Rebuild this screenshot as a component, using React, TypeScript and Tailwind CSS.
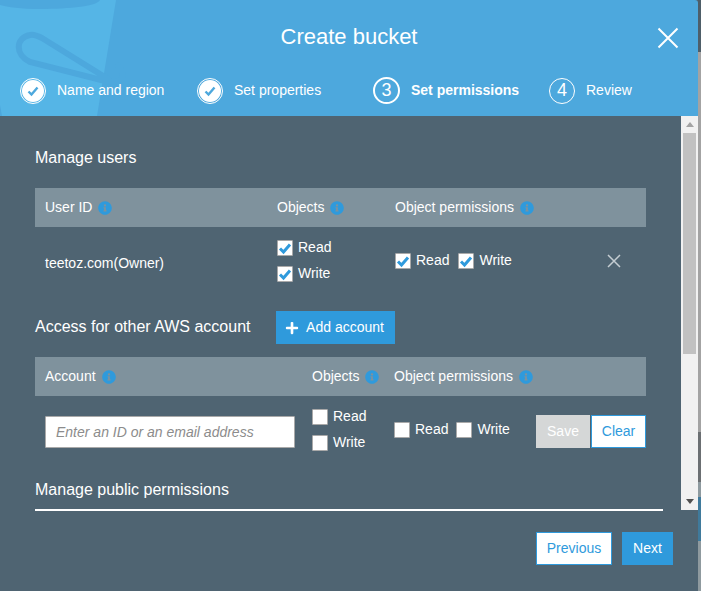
import React from "react";
import { FaInfoCircle, FaPlus } from "react-icons/fa";

function Info() {
  return <FaInfoCircle className="text-[#2f9adc] ml-[6px] w-[14px] h-[14px] shrink-0" />;
}

function Check({ checked, className = "" }: { checked?: boolean; className?: string }) {
  return (
    <span className={"flex items-center justify-center w-[16px] h-[16px] bg-white border border-[#a9a9a9] rounded-[1px] shrink-0 " + className}>
      {checked && (
        <svg viewBox="0 0 14 14" className="w-[14px] h-[14px]">
          <path d="M2 7.5 L5.5 11 L12 3.5" fill="none" stroke="#2f9adc" strokeWidth="3" />
        </svg>
      )}
    </span>
  );
}

function Opt({ label, checked, gap = "ml-[5px]" }: { label: string; checked?: boolean; gap?: string }) {
  return (
    <div className="flex items-center h-[16px]">
      <Check checked={checked} />
      <span className={gap + " text-[14px] text-white"}>{label}</span>
    </div>
  );
}

function Step({ label, state, n, wide }: { label: string; state: "done" | "active" | "todo"; n?: number; wide: string }) {
  return (
    <div className={"flex items-center " + wide}>
      {state === "done" && (
        <span className="flex items-center justify-center w-[26px] h-[26px] rounded-full border border-white shrink-0">
          <span className="flex items-center justify-center w-[22px] h-[22px] rounded-full bg-white">
            <svg viewBox="0 0 14 14" className="w-[14px] h-[14px]">
              <path d="M2.5 7.5 L5.5 10.5 L11.5 3.5" fill="none" stroke="#4da8dd" strokeWidth="2.4" />
            </svg>
          </span>
        </span>
      )}
      {state === "active" && (
        <span className="flex items-center justify-center w-[27px] h-[27px] rounded-full border-2 border-white text-white text-[18px] shrink-0">{n}</span>
      )}
      {state === "todo" && (
        <span className="flex items-center justify-center w-[26px] h-[26px] rounded-full border border-white text-white text-[18px] font-light shrink-0">{n}</span>
      )}
      <span className={(state === "active" ? "ml-[11px] font-bold" : "ml-[11px]") + " text-[14px] text-white whitespace-nowrap"}>{label}</span>
    </div>
  );
}

export default function App() {
  return (
    <div className="flex w-[701px] h-[591px] overflow-hidden bg-[#4f6472] [font-family:'Liberation_Sans',Arial,sans-serif]">
      <div className="flex flex-col w-[698px] h-full">
        <header className="relative h-[116px] bg-[#4da8dd] rounded-tr-[3px] overflow-hidden shrink-0">
          <svg className="absolute left-0 top-0" width="130" height="116" viewBox="0 0 130 116">
            <path d="M0 0 H116 L97 116 H2 L0 105 Z" fill="#55b5e6" />
            <path d="M0 0 H100 C98 6 70 9 40 9 C20 9 8 7 0 5 Z" fill="#4da8dd" />
            <path
              d="M118 66 C124 72 127 82 112 82 L105 81 L30 62 C15 55 15 38 30 35 C34 34 38 36 42 38 L108 79"
              fill="none"
              stroke="#4da8dd"
              strokeWidth="6"
              strokeLinecap="round"
            />
          </svg>
          <div className="relative flex justify-center pt-[24px]">
            <h1 className="text-[22px] leading-[26px] text-white">Create bucket</h1>
          </div>
          <svg className="absolute left-[657px] top-[27px]" width="22" height="22" viewBox="0 0 22 22">
            <path d="M1.5 1.5 L20.5 20.5 M20.5 1.5 L1.5 20.5" stroke="#fff" strokeWidth="2" fill="none" />
          </svg>
          <nav className="relative flex pl-[20px] pt-[27px]">
            <Step label="Name and region" state="done" wide="w-[177px]" />
            <Step label="Set properties" state="done" wide="w-[176px]" />
            <Step label="Set permissions" state="active" n={3} wide="w-[176px]" />
            <Step label="Review" state="todo" n={4} wide="w-[120px]" />
          </nav>
        </header>

        <div className="flex h-[394px] shrink-0">
          <main className="w-[681px] overflow-hidden pl-[35px] pt-[33px]">
            <h2 className="text-[16px] leading-[18px] text-white">Manage users</h2>
            <div className="mt-[21px] w-[611px] h-[39px] bg-[#7f929d] grid grid-cols-[232px_118px_1fr] pl-[10px] items-center text-[14px] text-white">
              <div className="flex items-center">User ID<Info /></div>
              <div className="flex items-center">Objects<Info /></div>
              <div className="flex items-center">Object permissions<Info /></div>
            </div>
            <div className="w-[611px] h-[67px] grid grid-cols-[232px_118px_1fr] pl-[10px] items-center text-[14px] text-white">
              <div className="mt-[6px]">teetoz.com(Owner)</div>
              <div className="flex flex-col gap-[10px]">
                <Opt label="Read" checked />
                <Opt label="Write" checked />
              </div>
              <div className="flex items-center">
                <Opt label="Read" checked />
                <div className="ml-[9px]"><Opt label="Write" checked /></div>
                <svg className="ml-[95px]" width="14" height="14" viewBox="0 0 14 14">
                  <path d="M1 1 L13 13 M13 1 L1 13" stroke="#c5cdd2" strokeWidth="1.5" fill="none" />
                </svg>
              </div>
            </div>

            <div className="flex items-center h-[33px] mt-[17px]">
              <h2 className="w-[241px] text-[16px] text-white -mt-[2px]">Access for other AWS account</h2>
              <button className="flex items-center justify-center w-[119px] h-[33px] pr-[2px] bg-[#2f9adc] text-[14px] text-white">
                <FaPlus className="w-[14px] h-[14px] mr-[7px]" />
                Add account
              </button>
            </div>

            <div className="mt-[13px] w-[611px] h-[39px] bg-[#7f929d] grid grid-cols-[267px_82px_1fr] pl-[10px] items-center text-[14px] text-white">
              <div className="flex items-center">Account<Info /></div>
              <div className="flex items-center">Objects<Info /></div>
              <div className="flex items-center">Object permissions<Info /></div>
            </div>
            <div className="w-[611px] h-[67px] grid grid-cols-[267px_82px_142px_1fr] pl-[10px] items-center text-[14px] text-white">
              <div className="w-[250px] h-[32px] mt-[5px] flex items-center bg-white border border-[#a9a9a9] rounded-[1px] pl-[10px] text-[14px] italic text-[#8c8c8c] whitespace-nowrap">
                Enter an ID or an email address
              </div>
              <div className="flex flex-col gap-[10px]">
                <Opt label="Read" />
                <Opt label="Write" />
              </div>
              <div className="flex items-center">
                <Opt label="Read" />
                <div className="ml-[8px]"><Opt label="Write" /></div>
              </div>
              <div className="flex items-center gap-[1px] mt-[4px]">
                <button className="w-[54px] h-[33px] bg-[#d5d7d7] text-[14px] text-white">Save</button>
                <button className="w-[55px] h-[33px] bg-white border border-[#2f9adc] text-[14px] text-[#2f9adc]">Clear</button>
              </div>
            </div>

            <h2 className="mt-[18px] text-[16px] leading-[18px] text-white">Manage public permissions</h2>
          </main>

          <div className="w-[17px] h-full bg-[#f1f1f1] flex flex-col items-center">
            <svg className="mt-[6px]" width="8" height="5" viewBox="0 0 8 5"><path d="M4 0 L8 5 H0 Z" fill="#a3a3a3" /></svg>
            <div className="mt-[6px] w-[13px] h-[221px] bg-[#c1c1c1]" />
            <svg className="mt-auto mb-[6px]" width="8" height="5" viewBox="0 0 8 5"><path d="M0 0 H8 L4 5 Z" fill="#505050" /></svg>
          </div>
        </div>

        <footer className="flex-1 pl-[35px]">
          <div className="w-[628px] h-[2px] -mt-[1px] bg-white relative" />
          <div className="flex justify-end w-[638px] mt-[21px]">
            <button className="w-[76px] h-[33px] bg-white border border-[#2f9adc] text-[14px] text-[#2f9adc]">Previous</button>
            <button className="w-[51px] h-[33px] ml-[10px] bg-[#2f9adc] text-[14px] text-white">Next</button>
          </div>
        </footer>
      </div>

      <div className="flex flex-col flex-1 h-full">
        <div className="h-[52px] bg-[#4e5e69]" />
        <div className="h-[380px] bg-[#a3a3a3]" />
        <div className="h-[50px] bg-[#6b6f72]" />
        <div className="h-[15px] bg-[#8e9a9f]" />
        <div className="h-[44px] bg-[#3f7a9c]" />
        <div className="flex-1 bg-[#8f9a9f]" />
      </div>
    </div>
  );
}
